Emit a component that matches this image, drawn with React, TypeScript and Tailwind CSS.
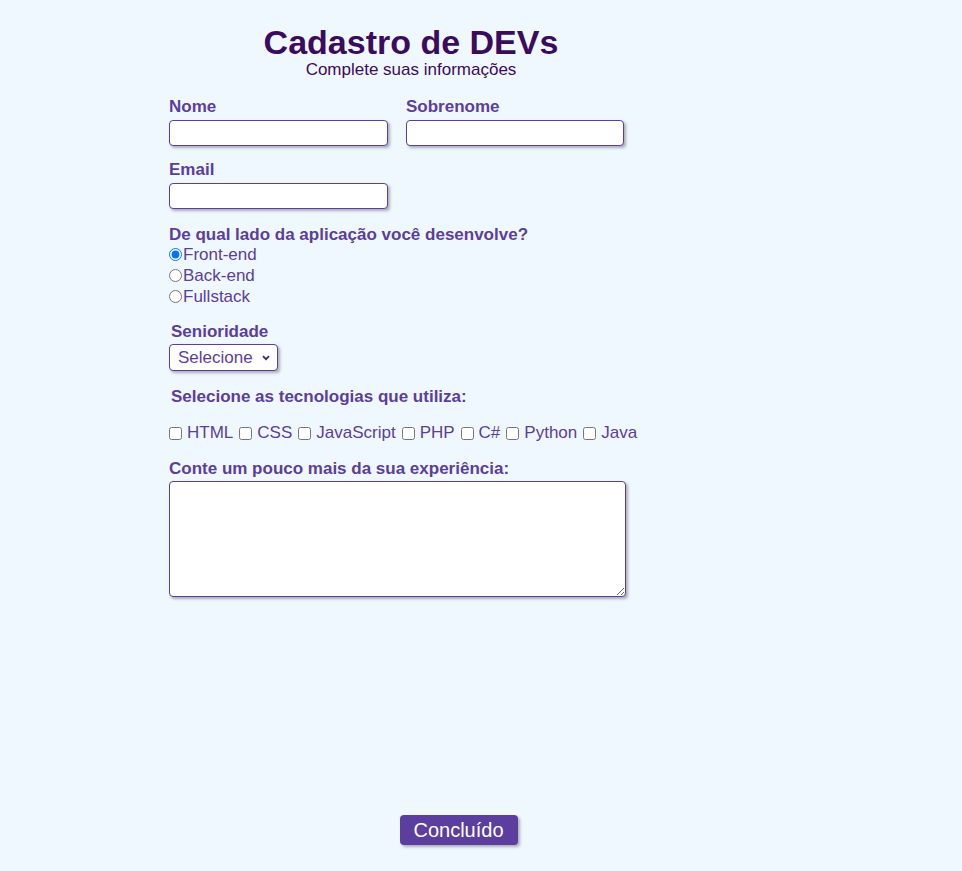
import { useState } from "react";

const tecnologias = ["HTML", "CSS", "JavaScript", "PHP", "C#", "Python", "Java"];

export default function App() {
    const [lado, setLado] = useState("front");

    const label = "block font-bold text-[17px] leading-[20px] text-[#5b3e9d]";
    const campo = "block h-[26px] bg-white border border-[#5b3e9d] rounded-[4px] shadow-[2px_2px_3px_rgba(0,0,0,0.3)] outline-none";

    return (
        <div className="min-h-[871px] w-full bg-[#f0f8ff] font-['Liberation_Sans',Arial,sans-serif] text-[#5b3e9d] flex flex-col">
            <header className="ml-[169px] w-[484px] text-center text-[#3b0b5e]">
                <h1 className="mt-[24px] text-[34px] leading-[36px] font-bold">Cadastro de DEVs</h1>
                <p className="text-[17px] leading-[19px]">Complete suas informações</p>
            </header>

            <form className="ml-[169px] mt-[18px] flex flex-col" onSubmit={(e) => e.preventDefault()}>
                <div className="flex gap-[18px]">
                    <div>
                        <label htmlFor="nome" className={label + " mb-[3px]"}>Nome</label>
                        <input id="nome" type="text" className={campo + " w-[219px]"} />
                    </div>
                    <div>
                        <label htmlFor="sobrenome" className={label + " mb-[3px]"}>Sobrenome</label>
                        <input id="sobrenome" type="text" className={campo + " w-[218px]"} />
                    </div>
                </div>

                <div className="mt-[14px]">
                    <label htmlFor="email" className={label + " mb-[3px]"}>Email</label>
                    <input id="email" type="email" className={campo + " w-[219px]"} />
                </div>

                <div className="mt-[16px]">
                    <p className="block font-bold text-[17px] leading-[19px] text-[#5b3e9d]">De qual lado da aplicação você desenvolve?</p>
                    {[
                        ["front", "Front-end"],
                        ["back", "Back-end"],
                        ["full", "Fullstack"],
                    ].map(([valor, texto]) => (
                        <label key={valor} className="flex items-center h-[21px] text-[17px]">
                            <input
                                type="radio"
                                name="lado"
                                value={valor}
                                checked={lado === valor}
                                onChange={() => setLado(valor)}
                                className="w-[13px] h-[13px] m-0 mr-[1px]"
                            />
                            {texto}
                        </label>
                    ))}
                </div>

                <div className="mt-[15px]">
                    <label htmlFor="senioridade" className={label + " ml-[2px] mb-[2px]"}>Senioridade</label>
                    <div className="relative w-[109px]">
                        <select
                            id="senioridade"
                            className="appearance-none w-[109px] h-[27px] pl-[8px] text-[17px] bg-white border border-[#5b3e9d] rounded-[4px] shadow-[2px_2px_3px_rgba(0,0,0,0.3)] outline-none"
                        >
                            <option>Selecione</option>
                            <option>Júnior</option>
                            <option>Pleno</option>
                            <option>Sênior</option>
                        </select>
                        <svg className="absolute right-[8px] top-[11px] pointer-events-none" width="8" height="6" viewBox="0 0 8 6">
                            <path d="M1 1.2 L4 4.2 L7 1.2" fill="none" stroke="#3b2a5e" strokeWidth="1.8" />
                        </svg>
                    </div>
                </div>

                <p className={label + " ml-[2px] mt-[16px]"}>Selecione as tecnologias que utiliza:</p>

                <div className="mt-[16px] flex items-center h-[20px] text-[17px] gap-[6px]">
                    {tecnologias.map((t) => (
                        <label key={t} className="flex items-center gap-[5px]">
                            <input type="checkbox" className="w-[13px] h-[13px] m-0" />
                            {t}
                        </label>
                    ))}
                </div>

                <div className="mt-[16px]">
                    <label htmlFor="experiencia" className={label + " mb-[2px]"}>Conte um pouco mais da sua experiência:</label>
                    <textarea
                        id="experiencia"
                        className="block w-[457px] h-[116px] bg-white border border-[#5b3e9d] rounded-[4px] shadow-[2px_2px_3px_rgba(0,0,0,0.3)] outline-none"
                    />
                </div>
            </form>

            <div className="w-[917px] mt-[218px] flex justify-center">
                <button
                    type="submit"
                    className="w-[118px] h-[30px] bg-[#5b3e9d] text-white text-[20px] leading-[30px] rounded-[4px] shadow-[2px_2px_3px_rgba(0,0,0,0.3)]"
                >
                    Concluído
                </button>
            </div>
        </div>
    );
}
